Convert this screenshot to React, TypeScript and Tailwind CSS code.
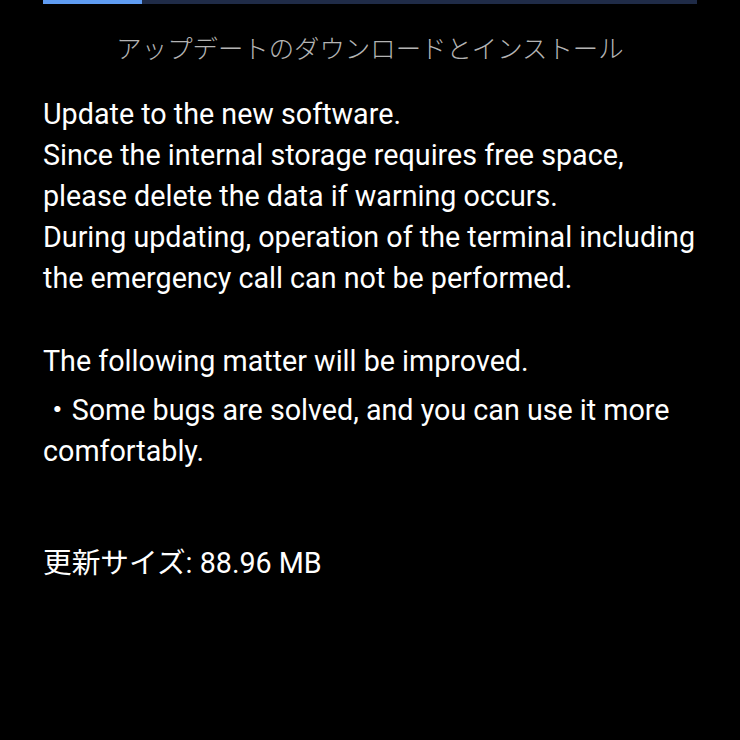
export default function App() {
  return (
    <div className="w-[740px] h-[740px] bg-black overflow-hidden" style={{ fontFamily: 'Roboto, "Noto Sans CJK JP", sans-serif' }}>
      <div className="mx-[43px] h-[4px] bg-[#1f2b47] flex">
        <div className="w-[99px] h-full bg-[#5f9cf2]" />
      </div>

      <h1 className="mt-[25px] text-center text-[25.4px] leading-[36px] font-light text-[#b4b4b4] font-['Noto_Sans_CJK_JP',sans-serif]">
        アップデートのダウンロードとインストール
      </h1>

      <div className="px-[43px] mt-[29px] text-[28.7px] leading-[41px] text-white">
        <p>Update to the new software.</p>
        <p>Since the internal storage requires free space,</p>
        <p>please delete the data if warning occurs.</p>
        <p>During updating, operation of the terminal including</p>
        <p>the emergency call can not be performed.</p>

        <p className="mt-[42px]">The following matter will be improved.</p>
        <p className="mt-[8px]">・Some bugs are solved, and you can use it more comfortably.</p>

        <p className="mt-[71px]">更新サイズ: 88.96 MB</p>
      </div>
    </div>
  )
}
